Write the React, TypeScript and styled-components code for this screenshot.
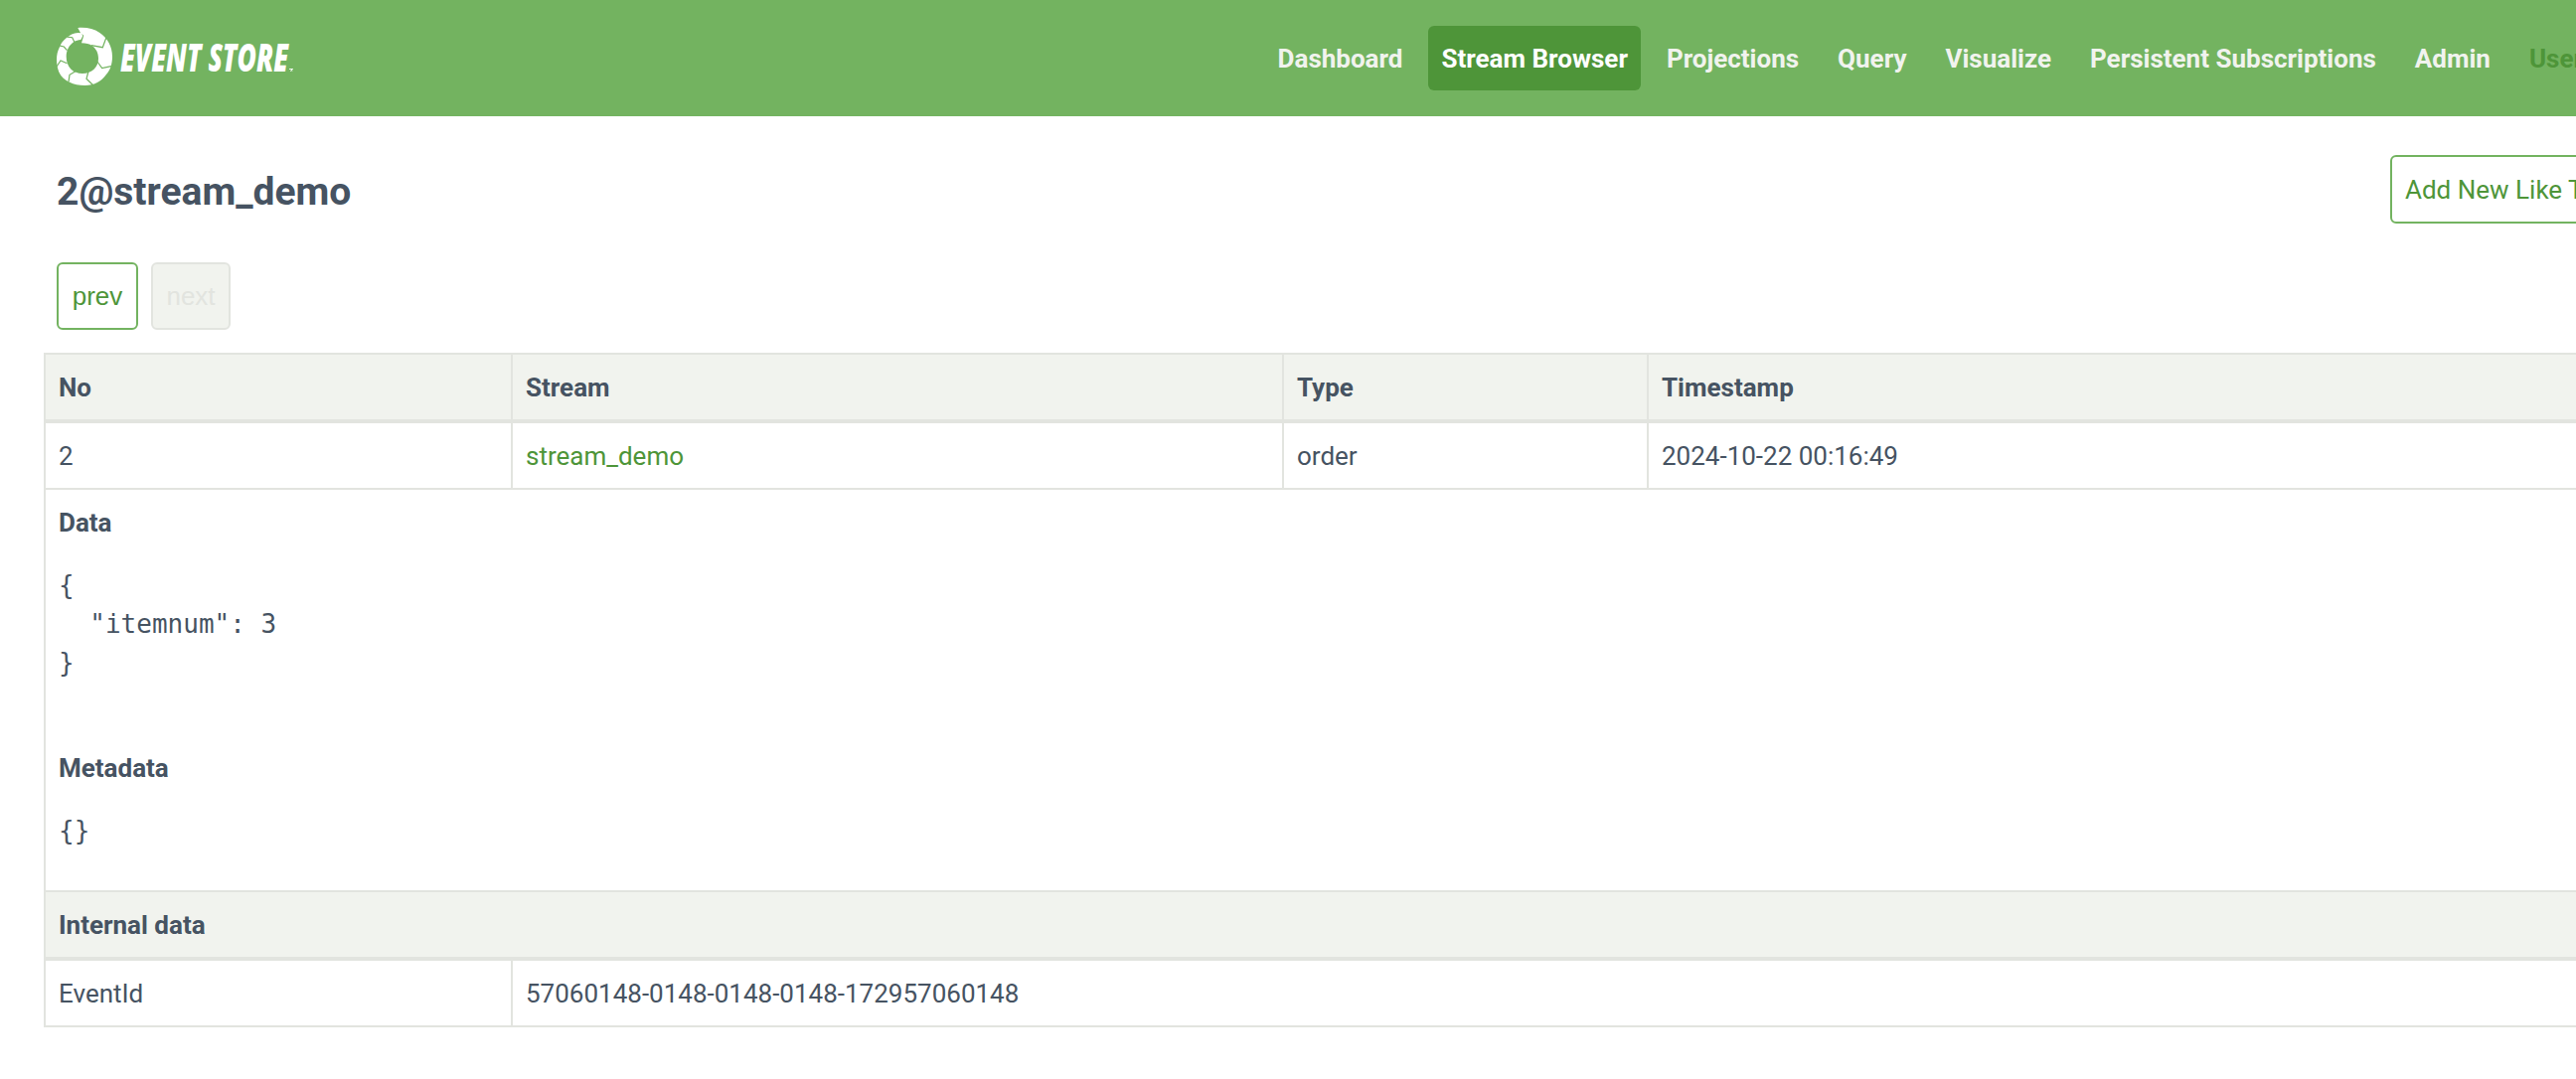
import React from "react";
import styled, { createGlobalStyle } from "styled-components";

const c = {
  green: "#73b360",
  dark: "#4e9539",
  text: "#465362",
  line: "#e2e4df",
  soft: "#f1f3ee",
};

const GlobalStyle = createGlobalStyle`
  *, *::before, *::after { box-sizing: border-box; }
  html, body { margin: 0; overflow: hidden; background: #fff; }
  body { font: 400 26px/39px Roboto, "Liberation Sans", sans-serif; color: ${c.text}; }
  a { text-decoration: none; }
`;

const Viewport = styled.div`
  width: 100vw;
  height: 100vh;
  overflow: hidden;
`;

const Page = styled.div`
  width: 2730px;
`;

const Header = styled.header`
  display: flex;
  align-items: center;
  height: 117px;
  padding-left: 57px;
  background: ${c.green};
`;

const Logo = styled.svg`
  display: block;
  flex: none;
  width: 245px;
  height: 61px;
  overflow: visible;
`;

const Nav = styled.nav`
  display: flex;
  gap: 13px;
  margin-left: 970.6px;
  white-space: nowrap;
`;

const NavLink = styled.a<{ $state?: "active" | "disabled" }>`
  padding: 14px 13px 12px;
  border-radius: 6px;
  font-weight: 700;
  color: ${(p) => (p.$state === "active" ? "#fff" : p.$state === "disabled" ? c.dark : c.soft)};
  background: ${(p) => (p.$state === "active" ? c.dark : "transparent")};
`;

const TitleRow = styled.div`
  display: flex;
  align-items: flex-start;
  padding: 39px 0 0 57px;
`;

const Title = styled.h1`
  flex: none;
  width: 2348px;
  margin: 0;
  padding-top: 8px;
  font-size: 39px;
  line-height: 58px;
  font-weight: 700;
`;

const LinkButton = styled.a`
  flex: none;
  display: block;
  padding: 14px 13px 12px;
  border: 2px solid ${c.green};
  border-radius: 6px;
  color: ${c.dark};
  white-space: nowrap;
`;

const Pager = styled.div`
  display: flex;
  gap: 13px;
  padding: 39px 0 0 57px;
`;

const PageButton = styled.button<{ $width: number }>`
  width: ${(p) => p.$width}px;
  height: 68px;
  padding: 0;
  border: 2px solid ${c.green};
  border-radius: 6px;
  background: #fff;
  color: ${c.dark};
  font: 26px/38px "Liberation Sans", Arial, sans-serif;
  text-align: center;

  &:disabled {
    border-color: ${c.line};
    background: ${c.soft};
    color: ${c.line};
  }
`;

const Table = styled.section`
  margin: 23px 0 0 44px;
  border: 2px solid ${c.line};
`;

const Row = styled.div<{ $head?: boolean }>`
  display: grid;
  grid-template-columns: 468px 776px 367px 1fr;
  border-bottom: ${(p) => (p.$head ? 4 : 2)}px solid ${c.line};
  background: ${(p) => (p.$head ? c.soft : "#fff")};
  font-weight: ${(p) => (p.$head ? 700 : 400)};
  &:last-child { border-bottom: 0; }
`;

const Cell = styled.div<{ $wide?: boolean }>`
  padding: 14px 13px 12px;
  grid-column: ${(p) => (p.$wide ? "span 3" : "auto")};
  & + & { border-left: 2px solid ${c.line}; }
`;

const StreamLink = styled.a`
  color: ${c.dark};
`;

const Details = styled.div`
  height: 405px;
  padding: 14px 13px 0;
  border-bottom: 2px solid ${c.line};
`;

const Label = styled.strong`
  display: block;
  font-weight: 700;
`;

const Code = styled.pre`
  margin: 24px 0 67px;
  font: 26px/39px "DejaVu Sans Mono", monospace;
`;

const EventStoreLogo = () => (
  <Logo viewBox="0 0 245 61" role="img" aria-label="Event Store">
    <path
      fill="#fff"
      d="M21.3 0C30 -.6 37.5 .8 43 4.7C51.500 10.500 56 19 56 29C56 36.500 54 42.500 49.700 47.300C44.500 54.500 37.500 58 28.500 58C22.500 58 17.500 57.300 13 54.800C8.500 52.500 4.500 49.500 2.300 44.500C.8 40.500 0 36.500 0 32C0 27.500 .8 23.500 3 19.300C4.500 15.500 6.500 12.800 9.700 10.300C13 7 17 5 21.500 4.900L24.700 5.300L26.300 8L24.300 12C21.500 12.300 19.500 12.900 17.300 14C12.500 17.500 9.700 22.500 9.700 29C9.700 39.500 16.500 46 26 46C35.500 46 42 39.500 42 31C42 25 39.500 21 36 18.300C33 16 29.500 15.300 25 15.300L27.300 7.700L24 5Z"
    />
    <g fill="none" stroke={c.green} strokeWidth="1.2">
      <path d="M50 9.500L46.300 19.700L35 17.700" />
      <path d="M56 38.400L45.700 40.700L40.500 33.500" />
      <path d="M36.700 57.700L30 51.300L31.900 44" />
      <path d="M12 54.500L13 47.300L19 43.800" />
      <path d="M0 39L4 33L10.500 35.700" />
      <path d="M1.500 17.700L7.300 19L10.500 22.700" />
      <path d="M10.500 9.200L15.700 9.700L17.700 14" />
    </g>
    <text
      x="64"
      y="44.2"
      fill="#fff"
      fontFamily='"Open Sans", sans-serif'
      fontSize="39"
      fontStyle="italic"
      fontWeight="800"
      textLength="169"
      lengthAdjust="spacingAndGlyphs"
    >
      EVENT STORE
    </text>
    <path fill="none" stroke="#fff" strokeWidth="1" opacity=".85" d="M234 41.500H238M235 43.500L237 42.500M236 41L237 43.500" />
  </Logo>
);

const NAV: { label: string; state?: "active" | "disabled" }[] = [
  { label: "Dashboard" },
  { label: "Stream Browser", state: "active" },
  { label: "Projections" },
  { label: "Query" },
  { label: "Visualize" },
  { label: "Persistent Subscriptions" },
  { label: "Admin" },
  { label: "Users", state: "disabled" },
];

export default function App() {
  return (
    <Viewport>
      <GlobalStyle />
      <Page>
        <Header>
          <EventStoreLogo />
          <Nav>
            {NAV.map((n) => (
              <NavLink key={n.label} $state={n.state}>
                {n.label}
              </NavLink>
            ))}
          </Nav>
        </Header>
        <TitleRow>
          <Title>2@stream_demo</Title>
          <LinkButton>Add New Like This</LinkButton>
        </TitleRow>
        <Pager>
          <PageButton $width={82}>prev</PageButton>
          <PageButton $width={80} disabled>
            next
          </PageButton>
        </Pager>
        <Table>
          <Row $head>
            <Cell>No</Cell>
            <Cell>Stream</Cell>
            <Cell>Type</Cell>
            <Cell>Timestamp</Cell>
          </Row>
          <Row>
            <Cell>2</Cell>
            <Cell>
              <StreamLink>stream_demo</StreamLink>
            </Cell>
            <Cell>order</Cell>
            <Cell>2024-10-22 00:16:49</Cell>
          </Row>
          <Details>
            <Label>Data</Label>
            <Code>{'{\n  "itemnum": 3\n}'}</Code>
            <Label>Metadata</Label>
            <Code>{"{}"}</Code>
          </Details>
          <Row $head>
            <Cell>Internal data</Cell>
          </Row>
          <Row>
            <Cell>EventId</Cell>
            <Cell $wide>57060148-0148-0148-0148-172957060148</Cell>
          </Row>
        </Table>
      </Page>
    </Viewport>
  );
}
